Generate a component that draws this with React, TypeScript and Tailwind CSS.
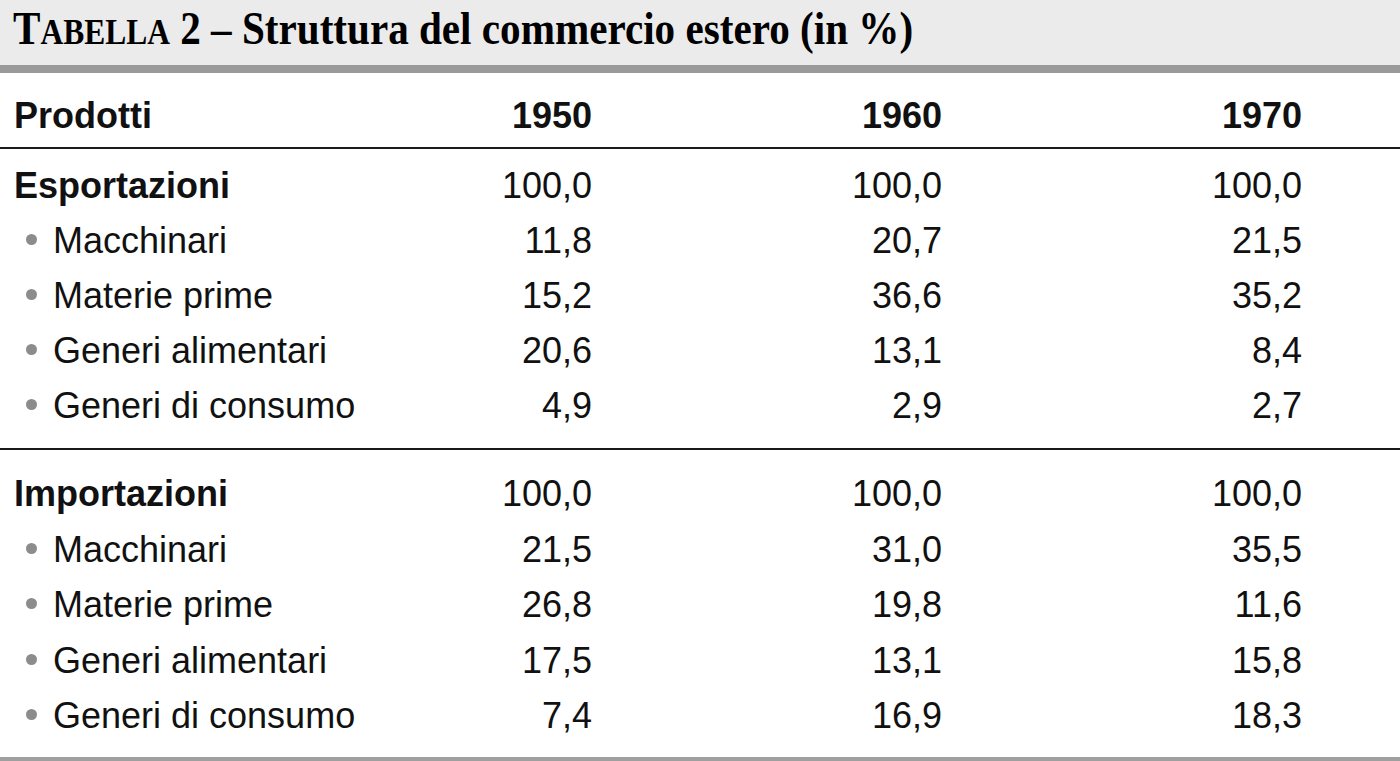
import React from "react";

type Row = { label: string; values: [string, string, string] };

interface SectionProps {
  title: string;
  total: [string, string, string];
  rows: Row[];
  rowH?: string;
}

const sans = "font-['Liberation_Sans',Arial,sans-serif]";

const exports: SectionProps = {
  title: "Esportazioni",
  total: ["100,0", "100,0", "100,0"],
  rows: [
    { label: "Macchinari", values: ["11,8", "20,7", "21,5"] },
    { label: "Materie prime", values: ["15,2", "36,6", "35,2"] },
    { label: "Generi alimentari", values: ["20,6", "13,1", "8,4"] },
    { label: "Generi di consumo", values: ["4,9", "2,9", "2,7"] },
  ],
};

const imports: SectionProps = {
  title: "Importazioni",
  total: ["100,0", "100,0", "100,0"],
  rows: [
    { label: "Macchinari", values: ["21,5", "31,0", "35,5"] },
    { label: "Materie prime", values: ["26,8", "19,8", "11,6"] },
    { label: "Generi alimentari", values: ["17,5", "13,1", "15,8"] },
    { label: "Generi di consumo", values: ["7,4", "16,9", "18,3"] },
  ],
};

// label column + three right-aligned number columns
const gridCols = "grid grid-cols-[428px_150px_350px_360px] pl-[14px] items-center";

const Section = ({ title, total, rows, rowH = "h-[55px]" }: SectionProps) => (
  <div>
    <div className={`${gridCols} ${rowH}`}>
      <div className="font-bold">{title}</div>
      {total.map((v, i) => (
        <div key={i} className="text-right">{v}</div>
      ))}
    </div>
    {rows.map((r) => (
      <div key={r.label} className={`${gridCols} ${rowH}`}>
        <div className="flex items-center pl-[12px] gap-[16px]">
          <span className="w-[11px] h-[11px] rounded-full bg-[#8c8c8c] mt-[-2px]" />
          <span>{r.label}</span>
        </div>
        {r.values.map((v, i) => (
          <div key={i} className="text-right">{v}</div>
        ))}
      </div>
    ))}
  </div>
);

export default function App() {
  return (
    <div className="w-[1400px] h-[761px] bg-white overflow-hidden text-[#111]">
      {/* title band */}
      <div className="h-[65px] bg-[#ebebeb] pl-[13px] overflow-hidden">
        <div className="inline-block origin-left scale-x-[0.875] whitespace-nowrap font-['Liberation_Serif','Times_New_Roman',serif] font-bold text-[47px] leading-[56px] text-black">
          T<span className="text-[36px]">ABELLA</span> 2 – Struttura del commercio estero (in %)
        </div>
      </div>
      <div className="h-[8px] bg-[#9a9a9a]" />

      <div className={`${sans} text-[36px] leading-[55px]`}>
        {/* column headings */}
        <div className={`${gridCols} h-[55px] mt-[15px] font-bold`}>
          <div>Prodotti</div>
          <div className="text-right">1950</div>
          <div className="text-right">1960</div>
          <div className="text-right">1970</div>
        </div>
        <div className="h-[2px] bg-[#1a1a1a] mt-[4px]" />

        <div className="mt-[9px]">
          <Section {...exports} />
        </div>
        <div className="h-[2px] bg-[#1a1a1a] mt-[15px]" />

        <div className="mt-[16px]">
          <Section {...imports} rowH="h-[55.5px]" />
        </div>
      </div>
      <div className="h-[6px] bg-[#9f9f9f] mt-[13px]" />
    </div>
  );
}
